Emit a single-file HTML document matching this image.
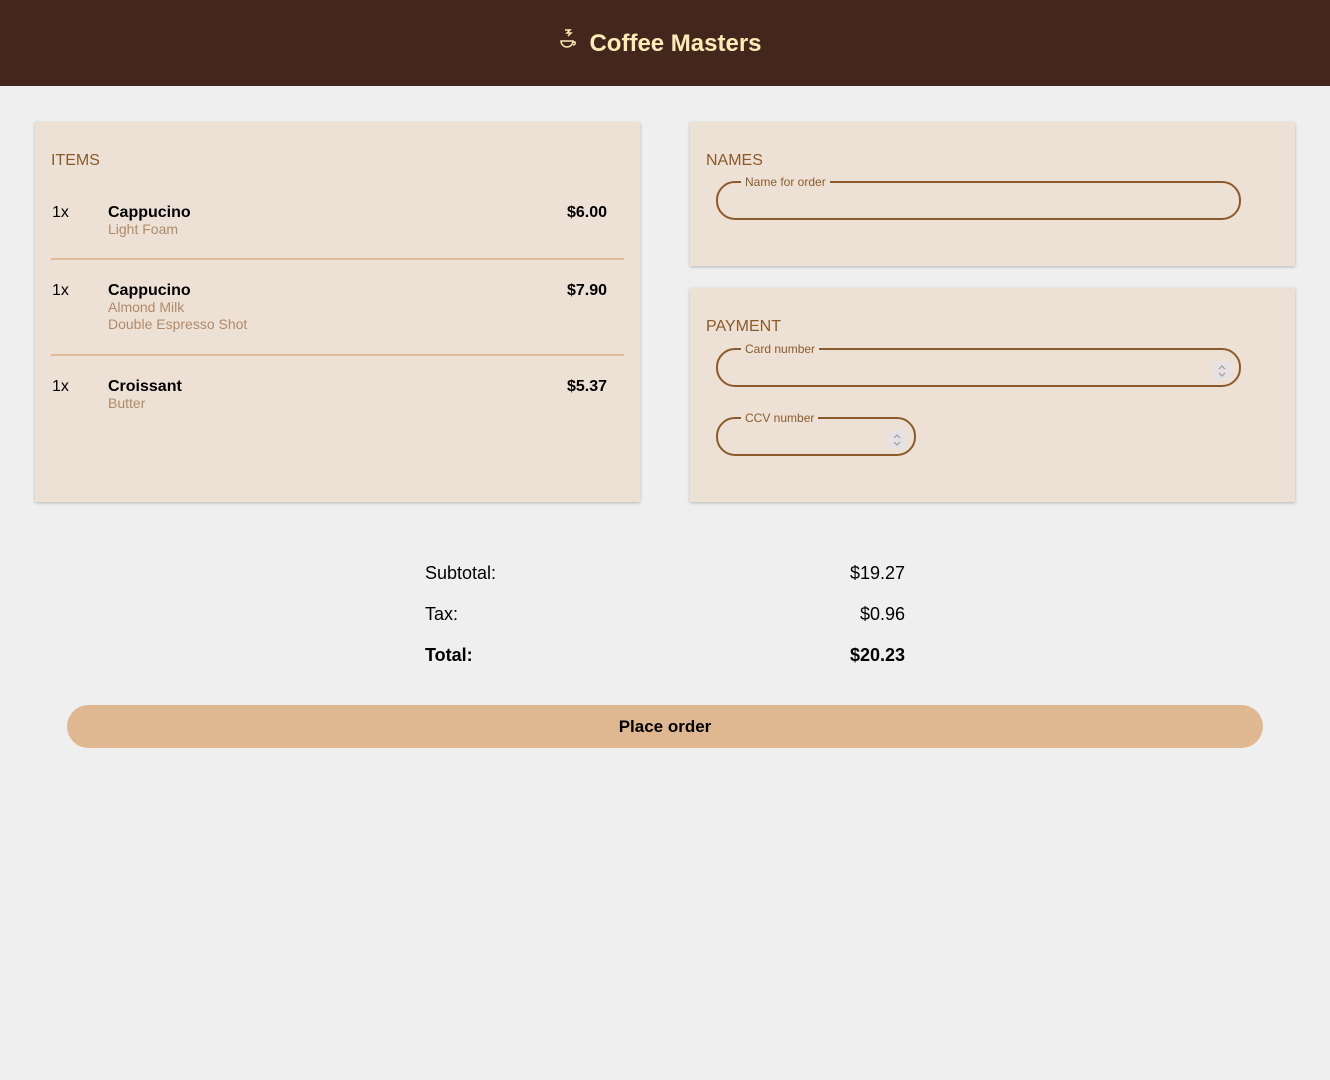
<!DOCTYPE html>
<html><head><meta charset="utf-8"><style>
*{box-sizing:border-box;margin:0;padding:0}
body{width:1330px;height:1080px;background:#efefef;font-family:"Liberation Sans",Arial,sans-serif;position:relative;overflow:hidden}
header{height:86px;background:#43271c;display:flex;align-items:center;justify-content:center;color:#fcebb6;font-weight:bold;font-size:24px;padding-top:2px;padding-right:10px}
header svg{margin-right:11px;margin-top:-8px}
.card{position:absolute;background:#ede1d6;box-shadow:0 1px 3px rgba(0,0,0,.25)}
.h{position:absolute;left:16px;color:#8b5a2b;font-size:16px}
.item{position:absolute;left:16px;width:573px;font-size:16px}
.q{position:absolute;left:1px;top:0}
.n{position:absolute;left:57px;top:0;font-weight:bold}
.p{position:absolute;left:516px;top:0;font-weight:bold}
.s{position:absolute;left:57px;color:#b08a68;font-size:14px}
.hr{position:absolute;left:16px;width:573px;height:2px;background:#dfbb98}
fieldset{position:absolute;border:2px solid #8b5a2b;border-radius:19px;padding:0 0 0 23px}
legend{color:#8b5a2b;font-size:12px;padding:0 4px;line-height:12px}
.spin{position:absolute;width:18px;height:18px;background:#e6e2e4;top:7px;border-radius:1px}
.tot{position:absolute;left:425px;width:480px;font-size:18px}
.tot span{position:absolute;right:0}
</style></head><body>
<header><svg width="20" height="22" viewBox="0 0 20 22" fill="none" stroke="#fcebb6" stroke-width="1.5"><path d="M7 1h5l-3 3h4l-3 3"/><path d="M3 12h12a6 6 0 0 1-12 0z"/><path d="M15 13h2a2 2 0 0 1-2 3"/></svg>Coffee Masters</header>

<div class="card" style="left:35px;top:122px;width:605px;height:380px">
<div class="h" style="top:30px">ITEMS</div>
<div class="item" style="top:82px"><span class="q">1x</span><span class="n">Cappucino</span><span class="p">$6.00</span><span class="s" style="top:17px">Light Foam</span></div>
<div class="hr" style="top:136px"></div>
<div class="item" style="top:160px"><span class="q">1x</span><span class="n">Cappucino</span><span class="p">$7.90</span><span class="s" style="top:17px;white-space:nowrap">Almond Milk</span><span class="s" style="top:34px;white-space:nowrap">Double Espresso Shot</span></div>
<div class="hr" style="top:232px"></div>
<div class="item" style="top:256px"><span class="q">1x</span><span class="n">Croissant</span><span class="p">$5.37</span><span class="s" style="top:17px">Butter</span></div>
</div>

<div class="card" style="left:690px;top:122px;width:605px;height:144px">
<div class="h" style="top:30px">NAMES</div>
<fieldset style="left:26px;top:54px;width:525px;height:44px"><legend>Name for order</legend></fieldset>
</div>

<div class="card" style="left:690px;top:288px;width:605px;height:214px">
<div class="h" style="top:30px">PAYMENT</div>
<fieldset style="left:26px;top:55px;width:525px;height:44px"><legend>Card number</legend><svg class="spin" style="right:8px" viewBox="0 0 18 18" fill="none" stroke="#9a98a0" stroke-width="1.2"><path d="M6 7l3-3 3 3M6 11l3 3 3-3"/></svg></fieldset>
<fieldset style="left:26px;top:124px;width:200px;height:44px"><legend>CCV number</legend><svg class="spin" style="right:8px" viewBox="0 0 18 18" fill="none" stroke="#9a98a0" stroke-width="1.2"><path d="M6 7l3-3 3 3M6 11l3 3 3-3"/></svg></fieldset>
</div>

<div class="tot" style="top:563px">Subtotal:<span>$19.27</span></div>
<div class="tot" style="top:604px">Tax:<span>$0.96</span></div>
<div class="tot" style="top:645px;font-weight:bold">Total:<span>$20.23</span></div>

<div style="position:absolute;left:67px;top:705px;width:1196px;height:43px;background:#dfb892;border-radius:22px;display:flex;align-items:center;justify-content:center;font-weight:bold;font-size:17px;padding-top:1px">Place order</div>
</body></html>
